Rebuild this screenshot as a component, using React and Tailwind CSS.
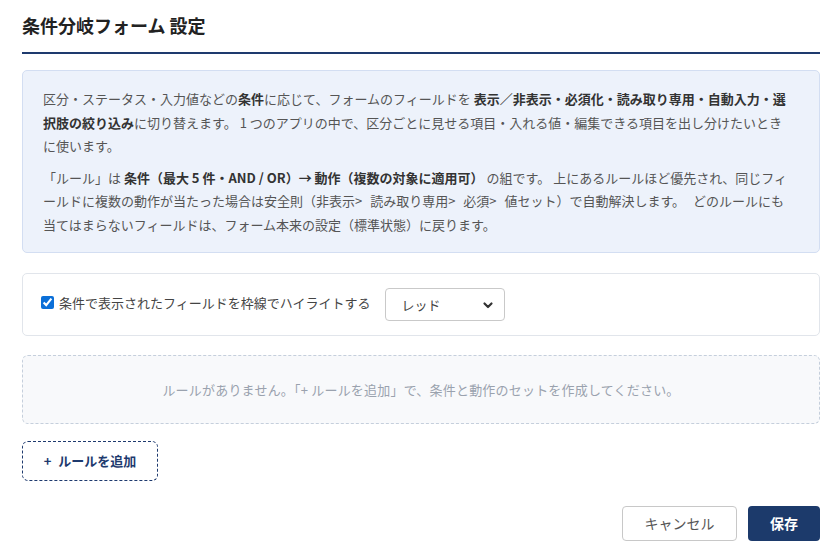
import React from "react";

export default function App() {
  const font = { fontFamily: '"Noto Sans CJK JP", "Noto Sans", sans-serif' };
  return (
    <div className="min-h-[558px] bg-white pl-[22px] pr-[16px] pt-[12px] pb-[15px] text-[13px] text-[#333]" style={font}>
      <div className="border-b-2 border-[#1e3a6e] pb-[13px]">
        <h1 className="text-[18px] font-bold leading-[27px] text-[#222]">条件分岐フォーム 設定</h1>
      </div>

      <div className="mt-4 rounded-[5px] border border-[#d3def2] bg-[#edf2fb] py-4 pl-5 pr-[29px] leading-[23.5px] text-[#555]">
        <p>
          区分・ステータス・入力値などの<b className="font-bold text-[#333]">条件</b>に応じて、フォームのフィールドを{" "}
          <b className="font-bold text-[#333]">表示／非表示・必須化・読み取り専用・自動入力・選択肢の絞り込み</b>
          に切り替えます。 1 つのアプリの中で、区分ごとに見せる項目・入れる値・編集できる項目を出し分けたいときに使います。
        </p>
        <p className="mt-2">
          「ルール」は <b className="font-bold text-[#333]">条件（最大 5 件・AND / OR）→ 動作（複数の対象に適用可）</b>{" "}
          の組です。 上にあるルールほど優先され、同じフィールドに複数の動作が当たった場合は
          <span className="[word-spacing:5px]">安全則（非表示&gt; 読み取り専用&gt; 必須&gt; 値セット）で自動解決します。 </span>
          どのルールにも当てはまらないフィールドは、フォーム本来の設定（標準状態）に戻ります。
        </p>
      </div>

      <div className="mt-5 flex h-[63px] items-center gap-[15px] rounded-[5px] border border-[#e1e5eb] bg-white px-[18px]">
        <label className="mb-1 flex items-center gap-[5px] text-[13px] text-[#444]">
          <input type="checkbox" defaultChecked className="h-[13px] w-[13px] accent-[#0b6fd8]" />
          <span>条件で表示されたフィールドを枠線でハイライトする</span>
        </label>
        <div className="flex h-[33px] w-[120px] items-center justify-between rounded-[4px] border border-[#c9c9c9] bg-white pl-[15px] pr-[10px] text-[#444]">
          <span>レッド</span>
          <svg width="12" height="12" viewBox="0 0 12 12" fill="none">
            <path d="M2.5 4.5 L6 8 L9.5 4.5" stroke="#333" strokeWidth="2.2" strokeLinecap="round" strokeLinejoin="round" />
          </svg>
        </div>
      </div>

      <div className="mt-[19px] flex h-[69px] items-center justify-center rounded-[6px] border border-dashed border-[#c5cfdc] bg-[#f8f9fb] tracking-[0.2px] text-[#9aa2ae]">
        ルールがありません。「+ ルールを追加」で、条件と動作のセットを作成してください。
      </div>

      <div className="mt-[17px]">
        <button className="flex h-[40px] w-[136px] items-center justify-center gap-[7px] rounded-[6px] border border-dashed border-[#1e3a6e] bg-white font-bold text-[#1e3a6e]">
          <span>+</span>
          <span>ルールを追加</span>
        </button>
      </div>

      <div className="mt-[25px] flex justify-end gap-[11px]">
        <button className="h-[35px] w-[115px] rounded-[4px] border border-[#c8c8c8] bg-white text-[14px] text-[#555]">キャンセル</button>
        <button className="h-[35px] w-[72px] rounded-[4px] bg-[#1c3a6b] text-[14px] font-bold text-white">保存</button>
      </div>
    </div>
  );
}
